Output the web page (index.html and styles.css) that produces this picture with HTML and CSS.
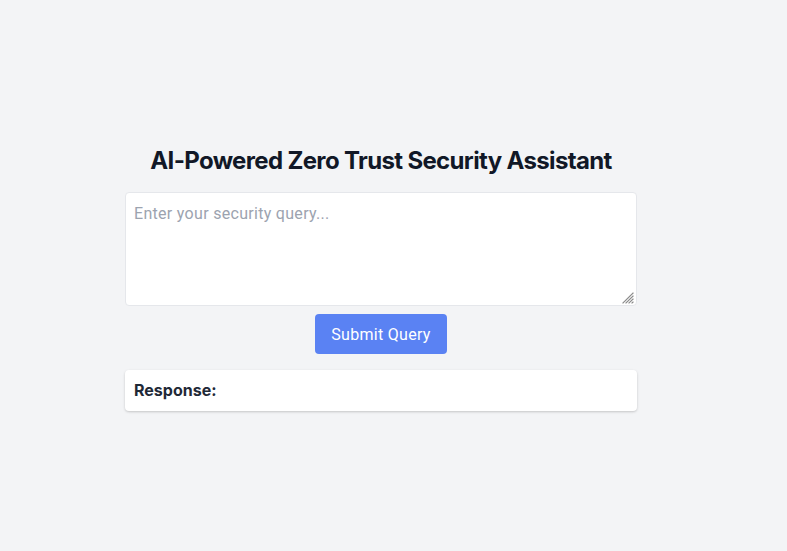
FILE: index.html
```html
<!DOCTYPE html>
<html lang="en">
<head>
<meta charset="utf-8">
<title>AI-Powered Zero Trust Security Assistant</title>
<link rel="stylesheet" href="styles.css">
</head>
<body>
<main class="page">
  <section class="panel">
    <h1 class="title">AI-Powered Zero Trust Security Assistant</h1>
    <div class="field">
      <textarea class="query" rows="4" placeholder="Enter your security query..."></textarea>
      <svg class="grip" width="12" height="12" viewBox="0 0 12 12" aria-hidden="true">
        <g stroke="#8a8a8a" stroke-width="1.2" stroke-linecap="square">
          <line x1="11" y1="1" x2="1" y2="11"/>
          <line x1="11" y1="4" x2="4" y2="11"/>
          <line x1="11" y1="7" x2="7" y2="11"/>
          <line x1="11" y1="10" x2="10" y2="11"/>
        </g>
      </svg>
    </div>
    <div class="actions">
      <button class="submit" type="button">Submit Query</button>
    </div>
    <div class="response"><strong>Response:</strong></div>
  </section>
</main>
</body>
</html>
```
FILE: styles.css
```css
* { box-sizing: border-box; }
html, body { margin: 0; padding: 0; }
body {
  background: #f3f4f6;
  font-family: Roboto, "Noto Sans", sans-serif;
  color: #111827;
  min-height: 100vh;
}
.page {
  padding: 144px 0 0 125px;
}
.panel {
  width: 512px;
  display: flex;
  flex-direction: column;
}
.title {
  margin: 0 0 16px;
  padding-top: 1px;
  height: 32px;
  font-family: Inter, Roboto, sans-serif;
  font-size: 24px;
  line-height: 32px;
  font-weight: 700;
  letter-spacing: -0.65px;
  text-align: center;
  color: #111827;
}
.field {
  position: relative;
}
.query {
  display: block;
  width: 100%;
  height: 114px;
  padding: 9px 8px 7px;
  border: 1px solid #e5e7eb;
  border-radius: 4px;
  background: #fff;
  font-family: Roboto, "Noto Sans", sans-serif;
  font-size: 16px;
  line-height: 24px;
  letter-spacing: 0.3px;
  color: #111827;
  resize: none;
  outline: none;
}
.query::placeholder { color: #9ca3af; }
.grip {
  position: absolute;
  right: 3px;
  bottom: 2px;
}
.actions {
  display: flex;
  justify-content: center;
  margin-top: 8px;
}
.submit {
  height: 40px;
  padding: 9px 16px 7px;
  border: 0;
  border-radius: 4px;
  background: #5a82f3;
  color: #fff;
  font-family: Roboto, "Noto Sans", sans-serif;
  font-size: 16px;
  line-height: 24px;
  letter-spacing: 0.3px;
}
.response {
  margin-top: 16px;
  padding: 8px 9px;
  min-height: 41px;
  background: #fff;
  border-radius: 4px;
  box-shadow: 0 1px 3px rgba(0,0,0,0.12), 0 1px 2px rgba(0,0,0,0.08);
  font-family: Inter, Roboto, sans-serif;
  font-size: 16px;
  line-height: 24px;
  color: #1f2937;
}
.response strong { font-weight: 700; }
```
